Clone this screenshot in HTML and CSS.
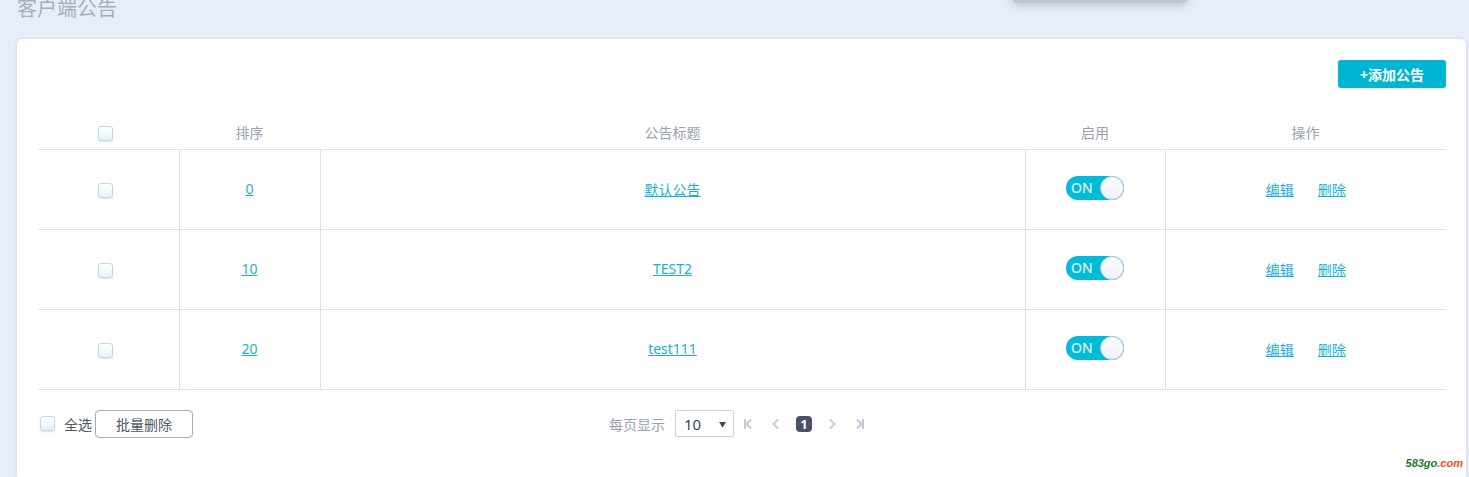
FILE: index.html
```html
<!DOCTYPE html>
<html lang="zh-CN">
<head>
  <meta charset="UTF-8">
  <title>客户端公告</title>
  <link rel="stylesheet" href="styles.css">
</head>
<body>
  <div class="menu-shadow"></div>
  <h2 class="page-title">客户端公告</h2>

  <div class="card">
    <div class="toolbar">
      <button class="btn-add">+添加公告</button>
    </div>

    <table class="notice-table">
      <colgroup>
        <col class="c-check">
        <col class="c-sort">
        <col class="c-title">
        <col class="c-on">
        <col>
      </colgroup>
      <thead>
        <tr>
          <th><span class="check"></span></th>
          <th>排序</th>
          <th>公告标题</th>
          <th>启用</th>
          <th>操作</th>
        </tr>
      </thead>
      <tbody>
        <tr>
          <td><span class="check"></span></td>
          <td><a href="#">0</a></td>
          <td><a href="#">默认公告</a></td>
          <td><span class="switch"><span class="switch-text">ON</span><span class="knob"></span></span></td>
          <td><a href="#" class="op">编辑</a><a href="#" class="op">删除</a></td>
        </tr>
        <tr>
          <td><span class="check"></span></td>
          <td><a href="#">10</a></td>
          <td><a href="#">TEST2</a></td>
          <td><span class="switch"><span class="switch-text">ON</span><span class="knob"></span></span></td>
          <td><a href="#" class="op">编辑</a><a href="#" class="op">删除</a></td>
        </tr>
        <tr>
          <td><span class="check"></span></td>
          <td><a href="#">20</a></td>
          <td><a href="#">test111</a></td>
          <td><span class="switch"><span class="switch-text">ON</span><span class="knob"></span></span></td>
          <td><a href="#" class="op">编辑</a><a href="#" class="op">删除</a></td>
        </tr>
      </tbody>
    </table>

    <div class="footer">
      <div class="bulk">
        <span class="check"></span>
        <span class="all-label">全选</span>
        <button class="btn-bulk">批量删除</button>
      </div>
      <div class="pager">
        <span class="per-page">每页显示</span>
        <span class="size-select">10<span class="caret">&#9660;</span></span>
        <span class="pg-icon">
          <svg width="10" height="12" viewBox="0 0 10 12"><path d="M2 1v10M8 1.5 3.5 6 8 10.5" fill="none" stroke="currentColor" stroke-width="2"/></svg>
        </span>
        <span class="pg-icon">
          <svg width="8" height="12" viewBox="0 0 8 12"><path d="M6 1.5 1.5 6 6 10.5" fill="none" stroke="currentColor" stroke-width="1.8"/></svg>
        </span>
        <span class="pg-current">1</span>
        <span class="pg-icon">
          <svg width="8" height="12" viewBox="0 0 8 12"><path d="M2 1.5 6.5 6 2 10.5" fill="none" stroke="currentColor" stroke-width="1.8"/></svg>
        </span>
        <span class="pg-icon">
          <svg width="10" height="12" viewBox="0 0 10 12"><path d="M8 1v10M2 1.5 6.5 6 2 10.5" fill="none" stroke="currentColor" stroke-width="2"/></svg>
        </span>
      </div>
    </div>
  </div>

  <div class="watermark"><span class="wm-green">583go</span><span class="wm-red">.com</span></div>
</body>
</html>
```

FILE: styles.css
```css
html, body {
  margin: 0;
  height: 100%;
  overflow: hidden;
}
body {
  background: #e8eef9;
  font-family: "Noto Sans", "Noto Sans CJK SC", sans-serif;
  font-size: 14px;
  color: #555d6e;
  position: relative;
}
.menu-shadow {
  position: absolute;
  left: 1012px;
  top: -20px;
  width: 176px;
  height: 23px;
  background: #bec6d3;
  border-radius: 6px;
  box-shadow: 0 2px 8px rgba(90, 100, 130, 0.35);
}
.page-title {
  margin: -2px 0 0 17px;
  height: 22px;
  font-size: 20px;
  line-height: 22px;
  font-weight: normal;
  color: #a7afbd;
}
.card {
  margin: 19px 3px 0 17px;
  background: #fff;
  border-radius: 5px 5px 0 0;
  box-shadow: 0 0 3px rgba(150, 165, 195, 0.45);
  padding: 21px 20px 0 21px;
  height: 438px;
  box-sizing: border-box;
}
.toolbar {
  display: flex;
  justify-content: flex-end;
}
.btn-add {
  width: 108px;
  height: 28px;
  border: none;
  border-radius: 3px;
  background: #00b5d1;
  color: #fff;
  font-family: inherit;
  font-size: 14px;
  font-weight: bold;
  cursor: pointer;
}
.notice-table {
  width: 100%;
  margin-top: 27px;
  border-collapse: collapse;
  table-layout: fixed;
}
.c-check { width: 141px; }
.c-sort { width: 141px; }
.c-title { width: 705px; }
.c-on { width: 140px; }
.notice-table th {
  height: 34px;
  font-weight: normal;
  color: #9aa2b1;
  border-bottom: 1px solid #dde2ea;
  text-align: center;
  padding: 0;
}
.notice-table tbody tr {
  height: 80px;
}
.notice-table td {
  text-align: center;
  border-bottom: 1px solid #dde2ea;
  border-left: 1px solid #dde2ea;
  padding: 0 0 2px;
}
.notice-table td:first-child {
  border-left: none;
}
.notice-table th:first-child .check,
.notice-table td:first-child .check {
  margin-right: 6px;
}
.notice-table a {
  color: #1cb0d6;
  text-decoration: underline;
}
.op {
  margin: 0 12px;
}
.check {
  display: inline-block;
  width: 13px;
  height: 13px;
  border: 1px solid #c9d3e2;
  border-radius: 3px;
  background: linear-gradient(#ffffff, #def6f9);
  box-shadow: 0 1px 2px rgba(150, 170, 200, 0.35);
  vertical-align: middle;
}
.switch {
  display: inline-flex;
  align-items: center;
  justify-content: space-between;
  width: 58px;
  height: 24px;
  border-radius: 12px;
  background: #00bcd9;
  box-sizing: border-box;
  vertical-align: middle;
  position: relative;
  top: -1px;
}
.switch-text {
  color: #fff;
  font-size: 14px;
  padding-left: 5px;
  line-height: 24px;
}
.knob {
  width: 24px;
  height: 24px;
  border-radius: 50%;
  box-sizing: border-box;
  border: 1px solid #b5c6e2;
  background: linear-gradient(#ffffff, #edf1f5);
}
.footer {
  display: flex;
  align-items: center;
  margin-top: 20px;
  position: relative;
  height: 27px;
}
.bulk {
  display: flex;
  align-items: center;
  padding-left: 2px;
}
.all-label {
  margin-left: 9px;
  color: #4f5668;
}
.btn-bulk {
  width: 98px;
  height: 28px;
  margin-left: 3px;
  border: 1px solid #a3abc2;
  border-radius: 4px;
  background: #fff;
  color: #4f5668;
  font-family: inherit;
  font-size: 14px;
  cursor: pointer;
}
.pager {
  display: flex;
  align-items: center;
  margin-left: 416px;
  color: #c2c9d7;
}
.per-page {
  color: #9aa2b1;
  margin-right: 10px;
}
.size-select {
  display: flex;
  align-items: center;
  justify-content: space-between;
  width: 59px;
  height: 27px;
  box-sizing: border-box;
  border: 1px solid #c7d3e3;
  border-radius: 2px;
  padding: 0 7px 0 8px;
  color: #3d4455;
  font-size: 15px;
}
.caret {
  font-size: 7px;
  color: #3d4455;
}
.pg-icon {
  display: inline-flex;
  align-items: center;
  justify-content: center;
  width: 28px;
  height: 16px;
}
.pg-current {
  display: inline-block;
  width: 16px;
  height: 16px;
  line-height: 16px;
  margin: 0 6px;
  border-radius: 4px;
  background: #4a5069;
  color: #fff;
  font-size: 13px;
  font-weight: bold;
  text-align: center;
}
.watermark {
  position: absolute;
  right: 6px;
  bottom: 8px;
  font-family: "Liberation Sans", sans-serif;
  font-size: 11px;
  font-weight: bold;
  font-style: italic;
}
.wm-green {
  color: #237a2b;
}
.wm-red {
  color: #e4501e;
}
```
